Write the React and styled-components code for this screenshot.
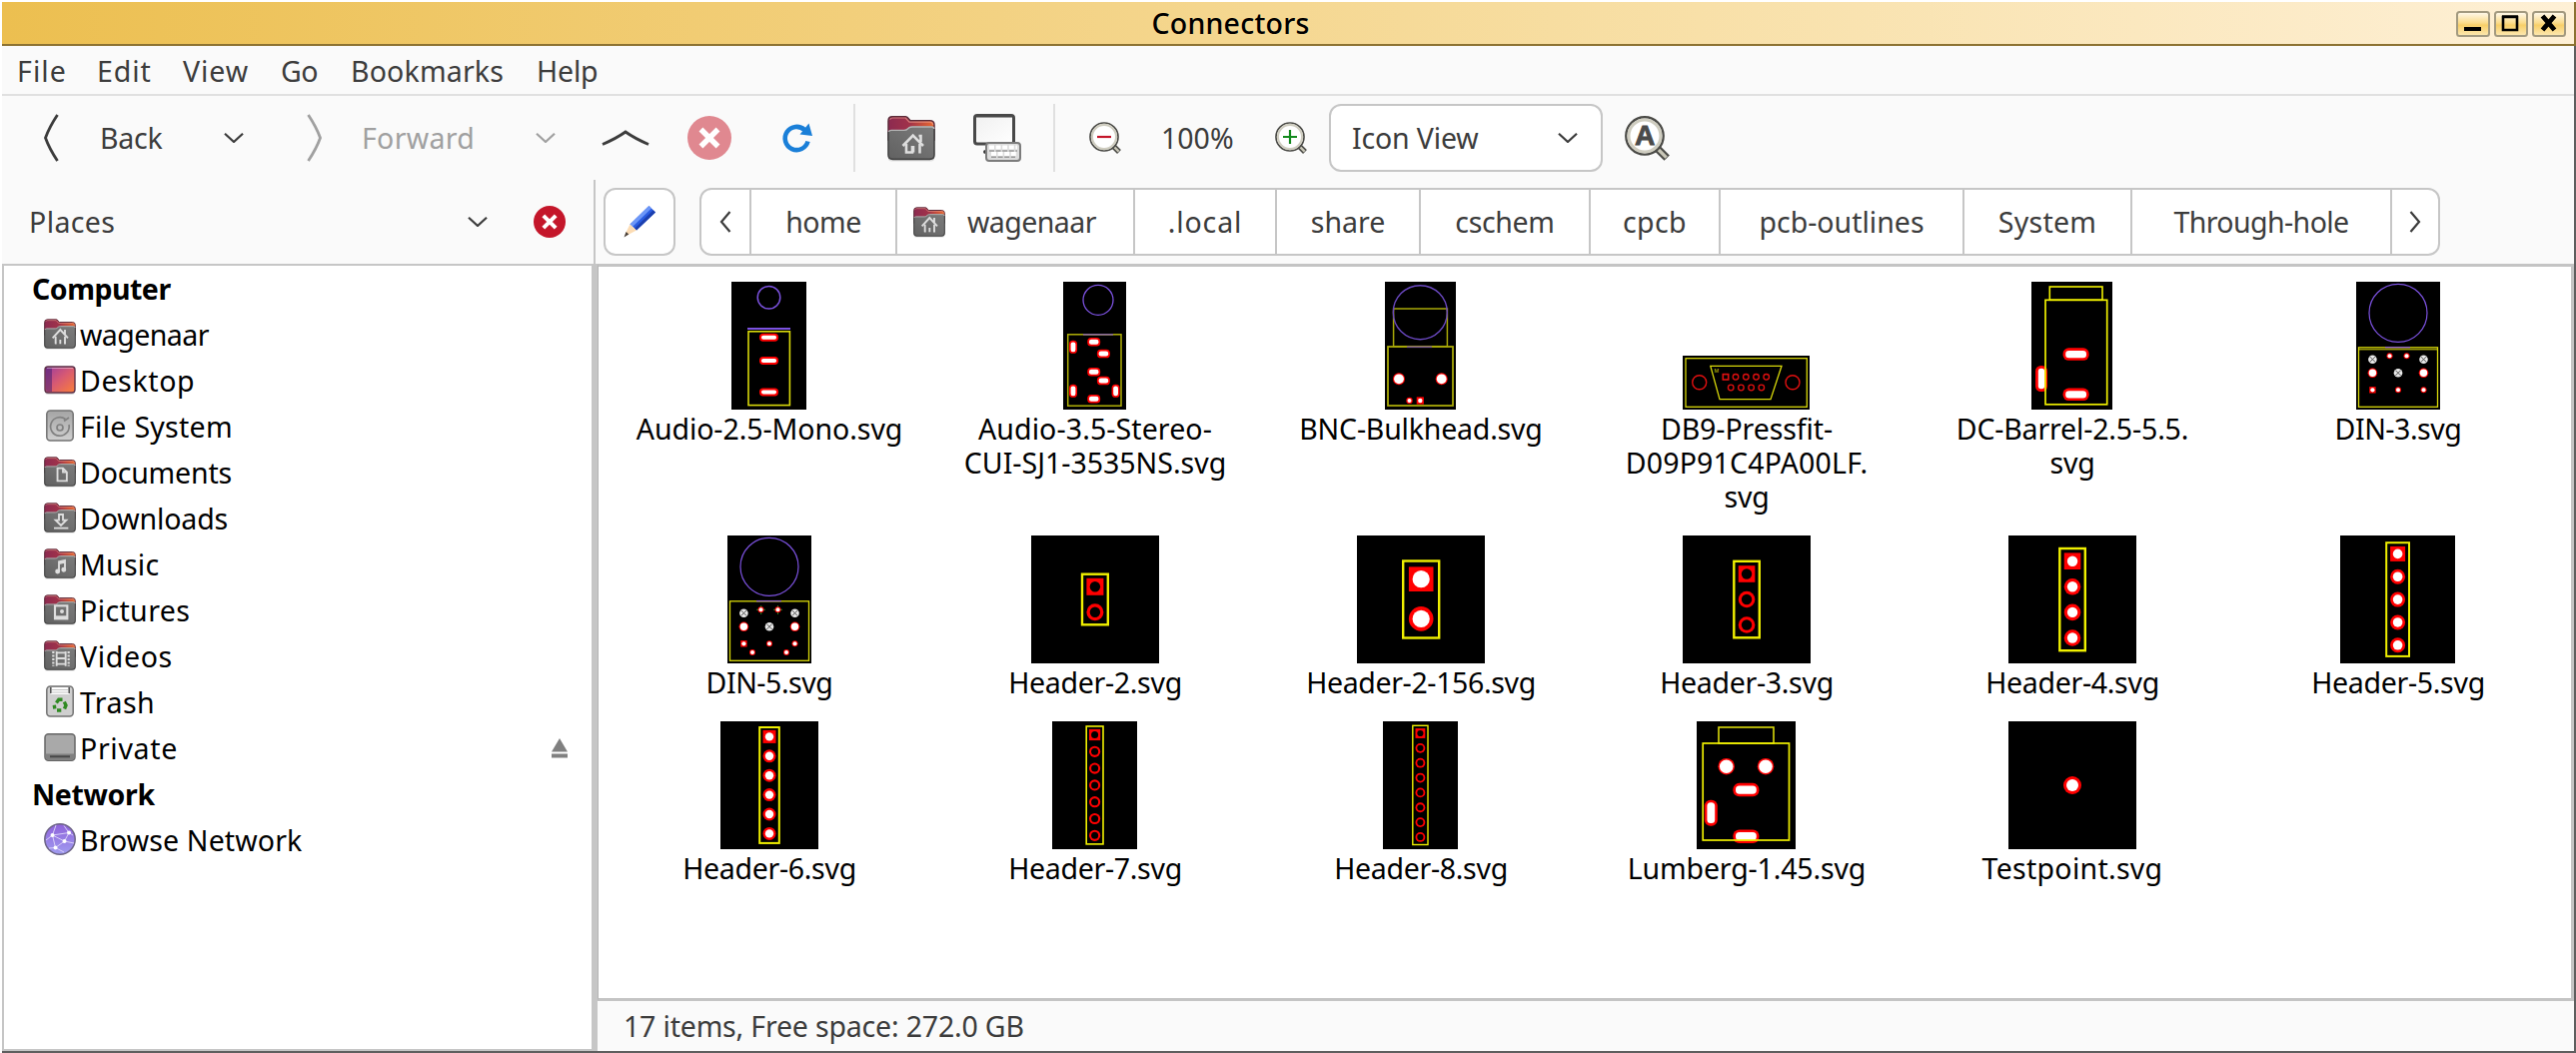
import React from "react";
import styled, { createGlobalStyle, css } from "styled-components";

const Global = createGlobalStyle`
  * { box-sizing: border-box; }
  body {
    margin: 0;
    background: #fff;
    font-family: "Noto Sans", "Open Sans", sans-serif;
    font-size: 28.5px;
    color: #3c3c3c;
  }
  svg { display: block; flex: none; }
`;

const LINE = "#c6c6c6";

/* letter spacing, in px, of the labels that deviate from the default */
const TRACKING = {
  File: 1.1, Edit: 0.9, View: 0.9, Go: -0.6, Bookmarks: 0.17, Help: -0.15,
  Back: -0.2, Forward: 0.33, Places: 0.39, home: -0.5, wagenaar: -0.55,
  ".local": 0.9, cschem: -0.34, cpcb: 0.37, System: 0.24, "Through-hole": -0.58,
  "Icon View": -0.16, Connectors: 0.22, Computer: -0.49, Desktop: 0.62,
  "File System": 0.28, Documents: -0.18, Downloads: -0.13, Music: 0.23,
  Pictures: 0.39, Videos: 0.66, Trash: 0.43, Private: 0.68, Network: -0.35,
  "Browse Network": 0.13, "17 items, Free space: 272.0 GB": -0.18,
  "Audio-2.5-Mono.svg": -0.07, "Audio-3.5-Stereo-": 0.1, "BNC-Bulkhead.svg": -0.2,
  "DB9-Pressfit-": -0.09, "D09P91C4PA00LF.": 0.18, svg: -0.3,
  "DC-Barrel-2.5-5.5.": -0.16, "DIN-3.svg": -0.45, "DIN-5.svg": -0.45,
  "Header-2.svg": -0.3, "Header-3.svg": -0.3, "Header-4.svg": -0.3,
  "Header-5.svg": -0.3, "Header-6.svg": -0.3, "Header-7.svg": -0.3,
  "Header-8.svg": -0.3, "Header-2-156.svg": -0.36, "Lumberg-1.45.svg": -0.15,
  "Testpoint.svg": 0.28,
};

const Tracked = styled.span`
  white-space: pre;
  letter-spacing: ${(p) => p.$ls}px;
`;

const Txt = ({ children }) => <Tracked $ls={TRACKING[children] || 0}>{children}</Tracked>;

/* ---------- window frame ---------- */

const Window = styled.div`
  width: 2578px;
  height: 1054px;
  padding: 2px 0 0 2px;
  display: flex;
  flex-direction: column;
  overflow: hidden;
`;

const TitleBar = styled.header`
  height: 44px;
  flex: none;
  display: grid;
  grid-template-columns: 1fr auto 1fr;
  align-items: center;
  background: linear-gradient(90deg, #ecbf50 0%, #f2cf7b 33%, #f8e0a8 66%, #fef0d6 100%);
  border-bottom: 2px solid #8c7232;
  border-right: 2px solid #8c7232;
`;

const Title = styled.h1`
  grid-column: 2;
  margin: 0 0 1px;
  padding-right: 115px;
  font-size: inherit;
  font-weight: 500;
  line-height: 42px;
  color: #000;
`;

const WindowButtons = styled.div`
  display: flex;
  justify-content: flex-end;
  gap: 4px;
  padding-right: 8px;
`;

const Body = styled.div`
  flex: 1;
  display: flex;
  flex-direction: column;
  background: #fafafa;
  border-right: 2px solid #5f5f5f;
  border-bottom: 2px solid #5f5f5f;
  min-height: 0;
`;

const MenuBar = styled.nav`
  height: 50px;
  flex: none;
  display: flex;
  align-items: center;
  padding: 2px 0 0;
  border-bottom: 2px solid #e0e0e0;
`;

const MenuItem = styled.div`
  width: ${(p) => p.$w}px;
  padding-left: 15px;
  white-space: pre;
`;

const ToolBar = styled.div`
  height: 84px;
  flex: none;
  display: flex;
  align-items: flex-start;
  padding-top: 8px;
`;

const Tool = styled.div`
  width: ${(p) => p.$w}px;
  height: 68px;
  flex: none;
  display: flex;
  align-items: center;
  padding-left: ${(p) => p.$pl || 0}px;
  white-space: pre;
  ${(p) => p.$dim && css`color: #a0a0a0;`}
`;

const Separator = styled.div`
  width: 2px;
  height: 68px;
  flex: none;
  background: #e0e0e0;
`;

const Select = styled.div`
  width: 274px;
  height: 68px;
  flex: none;
  display: flex;
  align-items: center;
  justify-content: space-between;
  padding: 0 23px 0 21px;
  background: #fff;
  border: 2px solid ${LINE};
  border-radius: 12px;
`;

const Panes = styled.div`
  flex: 1;
  display: flex;
  min-height: 0;
`;

const Side = styled.aside`
  width: 594px;
  flex: none;
  display: flex;
  flex-direction: column;
`;

const SideHead = styled.div`
  height: 84px;
  flex: none;
  display: flex;
  align-items: center;
  padding-left: 27px;
  border-right: 2px solid ${LINE};
`;

const SideHeadLabel = styled.div`
  width: 439px;
`;

const SideHeadClose = styled.div`
  margin-left: 46px;
`;

const SideList = styled.div`
  flex: 1;
  background: #fff;
  color: #000;
  border: 2px solid ${LINE};
  border-right-width: 6px;
  margin-right: -2px;
`;

const PlaceRow = styled.div`
  height: 46px;
  display: flex;
  align-items: center;
  padding-left: ${(p) => (p.$heading ? 28 : 40)}px;
  font-weight: ${(p) => (p.$heading ? 700 : 400)};
`;

const PlaceIcon = styled.div`
  width: 32px;
  height: 34px;
  margin-right: 4px;
`;

const Eject = styled.div`
  margin-left: auto;
  margin-right: 24px;
`;

const Main = styled.main`
  flex: 1;
  display: flex;
  flex-direction: column;
  min-width: 0;
`;

const PathRow = styled.div`
  height: 84px;
  flex: none;
  display: flex;
  align-items: center;
  gap: 24px;
  padding-left: 8px;
`;

const EditButton = styled.div`
  width: 72px;
  height: 68px;
  display: flex;
  align-items: center;
  justify-content: center;
  background: #fff;
  border: 2px solid ${LINE};
  border-radius: 12px;
`;

const PathBar = styled.div`
  height: 68px;
  display: flex;
  background: #fff;
  border: 2px solid ${LINE};
  border-radius: 12px;
`;

const Crumb = styled.div`
  width: ${(p) => p.$w}px;
  display: flex;
  align-items: center;
  justify-content: ${(p) => (p.$icon ? "flex-start" : "center")};
  padding-left: ${(p) => (p.$icon ? 16 : 0)}px;
  gap: 22px;
  & + & { border-left: 2px solid ${LINE}; }
`;

const FilePane = styled.section`
  flex: 1;
  background: #fff;
  border: 3px solid #c4c4c4;
  border-left: 1px solid #b4b4b4;
  margin-left: 2px;
  padding: 15px 0 0 8px;
  color: #000;
`;

const FileGrid = styled.div`
  display: grid;
  grid-template-columns: repeat(6, 326px);
  row-gap: 22px;
`;

const FileItem = styled.figure`
  margin: 0;
  display: flex;
  flex-direction: column;
  align-items: center;
`;

const ThumbBox = styled.div`
  height: 130px;
  padding-bottom: 2px;
  display: flex;
  align-items: flex-end;
`;

const BoardSvg = styled.svg`
  margin-right: ${(p) => p.width % 2}px;
`;

const FileName = styled.figcaption`
  display: flex;
  flex-direction: column;
  align-items: center;
  line-height: 34px;
`;

const StatusBar = styled.footer`
  height: 50px;
  flex: none;
  display: flex;
  align-items: center;
  padding-left: 28px;
`;

/* ---------- toolbar drawings ---------- */

const Stroke = ({ w, h, d, c = "#3c3c3c", sw = 2.4 }) => (
  <svg width={w} height={h} viewBox={`0 0 ${w} ${h}`} fill="none" stroke={c} strokeWidth={sw}>
    <path d={d} />
  </svg>
);

const Down = ({ c }) => <Stroke w={20} h={10} c={c} sw={2.2} d="M1 .8L10 9L19 .8" />;

const WinButton = ({ kind }) => (
  <svg width="34" height="26" viewBox="0 0 34 26">
    <defs>
      <linearGradient id="wb" x1="0" y1="0" x2="0" y2="1">
        <stop offset="0" stopColor="#fffaf0" />
        <stop offset=".45" stopColor="#fbdc8c" />
        <stop offset=".55" stopColor="#f8cf68" />
        <stop offset="1" stopColor="#fde9b4" />
      </linearGradient>
    </defs>
    <rect x="1" y="1" width="32" height="24" rx="2.5" fill="url(#wb)" stroke="#a39a80" strokeWidth="2" />
    {kind === "min" && <rect x="8" y="16" width="17" height="4" fill="#000" />}
    {kind === "max" && <path d="M9 6V19H23V6ZM8 5.5H24" fill="none" stroke="#000" strokeWidth="2.6" />}
    {kind === "close" && <path d="M10.500 5L22.500 19M22.500 5L10.500 19" stroke="#000" strokeWidth="4.8" />}
  </svg>
);

const CloseDot = ({ r, c }) => (
  <svg width={r * 2} height={r * 2} viewBox="0 0 32 32">
    <circle cx="16" cy="16" r="16" fill={c} />
    <path d="M9.800 9.800L22.200 22.200M22.200 9.800L9.800 22.200" stroke="#fff" strokeWidth="4" />
  </svg>
);

const Reload = () => (
  <svg width="32" height="32" viewBox="0 0 32 32">
    <path d="M26.5 19.5A11.6 11.6 0 1 1 23.2 8" fill="none" stroke="#1a7fd8" strokeWidth="4.6" />
    <path d="M27.5 1.5L31 14L18.5 12.5Z" fill="#1a7fd8" />
  </svg>
);

const Folder = ({ size, children }) => (
  <svg width={size} height={size} viewBox="0 0 48 48">
    <defs>
      <linearGradient id="fb" x1="0" y1="0" x2="1" y2="0">
        <stop offset="0" stopColor="#8c2a50" />
        <stop offset=".45" stopColor="#a0324a" />
        <stop offset="1" stopColor="#ea6a30" />
      </linearGradient>
      <linearGradient id="ff" x1="0" y1="1" x2="1" y2="0">
        <stop offset="0" stopColor="#616161" />
        <stop offset="1" stopColor="#7c7c7c" />
      </linearGradient>
    </defs>
    <rect x="1" y="40" width="46" height="7.5" rx="3" fill="#000" opacity=".1" />
    <path d="M1 7Q1 2.800 5 2.800H18.500Q20 2.800 21.500 5L23 6.800H42.500Q47 6.800 47 11V26H1Z" fill="url(#fb)" stroke="#5a2a38" strokeWidth="1.500" />
    <path d="M2.600 5.600Q3.500 4 5.500 4H18.300L22 8.200H43Q45.600 8.400 45.700 11" fill="none" stroke="#f0a090" strokeWidth="1.200" opacity=".65" />
    <path d="M1 18Q1 16 4 16H17Q19 16 21 14L22 13.200Q23 12.500 25 12.500H44.500Q47 12.500 47 15V41Q47 45.400 42.500 45.400H5.500Q1 45.400 1 41Z" fill="url(#ff)" />
    <path d="M1.500 17.800Q2 16.400 4 16.400H17Q19 16.400 21 14.400L22 13.600Q23 13 25 13H44.500Q46.500 13 46.700 15" fill="none" stroke="#b4b4b4" strokeWidth="1.400" />
    <path d="M1 18V41Q1 45.400 5.500 45.400H42.500Q47 45.400 47 41V15" fill="none" stroke="#444" strokeWidth="1.600" />
    <g fill="none" stroke="#dedede" strokeWidth="2.800">{children}</g>
  </svg>
);

const HomeGlyph = () => (
  <>
    <path d="M13 30.500L24.500 18L36 30.500M31.500 18V26" />
    <path d="M17.500 28V39.500M31.500 28V39.500M24.500 39.500V33M16.500 38.300H19M30 38.300H33" />
  </>
);

const BigHomeGlyph = () => (
  <g strokeWidth="2.600">
    <path d="M15.500 32L25.700 21.500L36 32M31.500 22H33.500V28" />
    <path d="M19 30V38.500H25V32M26 38.500V32M32.500 30V39.500" />
  </g>
);

const glyphs = {
  home: <HomeGlyph />,
  documents: <path d="M20.300 19H28.500L34.300 25V38H20.300ZM28.500 19V25H34.300" />,
  downloads: <path d="M22.500 19.500H28.500V28H33.500L25.500 36L17.500 28H22.500ZM15 40H36.500" />,
  music: (
    <>
      <path d="M22.500 36V21.500L31.500 19.500V33M22.500 24L31.500 22" />
      <circle cx="20.500" cy="36" r="2.300" fill="#dedede" />
      <circle cx="29.700" cy="33.500" r="2.300" fill="#dedede" />
    </>
  ),
  pictures: (
    <>
      <rect x="16.500" y="18.500" width="18.500" height="19.500" strokeWidth="3.200" />
      <path d="M16 36H36" strokeWidth="5" />
      <circle cx="27" cy="27" r="1.600" />
    </>
  ),
  videos: (
    <>
      <path d="M14 18V40M37 18V40" strokeWidth="3.400" strokeDasharray="3 2.200" />
      <path d="M19 18V40M32.500 18V40M19 20H32.500M19 28.500H32.500M19 37H32.500" />
    </>
  ),
};

const Desktop = () => (
  <svg width="32" height="32" viewBox="0 0 32 32">
    <defs>
      <linearGradient id="dk" x1="0" y1="0" x2="1" y2="1">
        <stop offset="0" stopColor="#9a3aa0" />
        <stop offset=".5" stopColor="#d85a72" />
        <stop offset="1" stopColor="#fb8038" />
      </linearGradient>
    </defs>
    <rect x="1" y="5" width="30" height="26" rx="3" fill="#000" opacity=".14" />
    <rect x="1" y="3" width="30" height="26" rx="3" fill="url(#dk)" stroke="#5c3048" strokeWidth="1.400" />
    <path d="M2 5Q2 4 4 4H8V28H4Q2 28 2 26Z" fill="#4a2070" opacity=".55" />
    <path d="M3 4.500H29" stroke="#fff" opacity=".4" />
  </svg>
);

const Disk = () => (
  <svg width="32" height="32" viewBox="0 0 32 32">
    <defs>
      <linearGradient id="ds" x1="0" y1="0" x2="0" y2="1">
        <stop offset="0" stopColor="#a4a4a4" />
        <stop offset="1" stopColor="#d0d0d0" />
      </linearGradient>
    </defs>
    <rect x="2.800" y="1" width="26.400" height="30" rx="3.500" fill="url(#ds)" stroke="#727272" strokeWidth="1.500" />
    <path d="M21.500 9.500A9.300 9.300 0 1 0 25 15" fill="none" stroke="#808080" strokeWidth="1.700" />
    <path d="M20 11.500L25 8" stroke="#808080" strokeWidth="1.700" />
    <circle cx="16" cy="18" r="3" fill="none" stroke="#808080" strokeWidth="1.700" />
  </svg>
);

const Trash = () => (
  <svg width="32" height="32" viewBox="0 0 32 32">
    <rect x="2.800" y="1" width="26.400" height="30" rx="3.500" fill="#cfcfcf" stroke="#727272" strokeWidth="1.500" />
    <rect x="6.500" y="2" width="19" height="7" fill="#fff" />
    <path d="M6.800 2V8M25.200 2V8" stroke="#555" strokeWidth="1.600" />
    <path d="M8 4.500H24M8 7H24" stroke="#bbb" strokeWidth=".9" />
    <g fill="none" stroke="#2f8a22" strokeWidth="3.400">
      <path d="M12.400 17.500L14.800 14.300H18.500" />
      <path d="M20.300 16.600L22 20L20.500 23.500" />
      <path d="M17.300 25H13M10.800 23.500L10.300 19.800" />
    </g>
  </svg>
);

const Drive = () => (
  <svg width="32" height="32" viewBox="0 0 32 32">
    <rect x="1" y="2.800" width="30" height="26.500" rx="3.500" fill="#a9a9a9" stroke="#666" strokeWidth="1.500" />
    <path d="M1.500 22.500H30.500V26Q30.500 28.700 27.500 28.700H4.500Q1.500 28.700 1.500 26Z" fill="#808080" />
    <path d="M6 25.300H26" stroke="#484848" strokeWidth="2" />
  </svg>
);

const Globe = () => (
  <svg width="32" height="32" viewBox="0 0 32 32">
    <defs>
      <linearGradient id="gl" x1="0" y1="0" x2="0" y2="1">
        <stop offset="0" stopColor="#8f62da" />
        <stop offset="1" stopColor="#a09cf0" />
      </linearGradient>
    </defs>
    <circle cx="16" cy="16" r="15.200" fill="url(#gl)" stroke="#6c6484" strokeWidth="1.500" />
    <path d="M8.500 12L25 9.500L20.500 18L11.500 24.500ZM8.500 12L20.500 18L30 20M8.500 12L2 17M25 9.500L20 2.500M8.500 12L12 2M25 9.500L29 12M11.500 24.500L20 29M11.500 24.500L5 25" fill="none" stroke="#d9cff8" strokeWidth="1" />
    <g fill="#fff">
      <circle cx="8.500" cy="12" r="2" />
      <circle cx="25" cy="9.500" r="2" />
      <circle cx="20.500" cy="18" r="2" />
      <circle cx="11.500" cy="24.500" r="2" />
    </g>
  </svg>
);

const EjectIcon = () => (
  <svg width="16" height="20" viewBox="0 0 16 20" fill="#808080">
    <path d="M8 0L16 13.500H0ZM0 15.500H16V19.500H0Z" />
  </svg>
);

const Computer = () => (
  <svg width="48" height="48" viewBox="0 0 48 48">
    <defs>
      <linearGradient id="sc" x1="0" y1="0" x2="1" y2="1">
        <stop offset="0" stopColor="#f0f0f0" />
        <stop offset="1" stopColor="#ffffff" />
      </linearGradient>
    </defs>
    <ellipse cx="12.500" cy="38" rx="2.500" ry="2" fill="#333" />
    <rect x="1.500" y="1.500" width="39" height="28.500" rx="2.500" fill="url(#sc)" stroke="#484848" strokeWidth="3" />
    <path d="M3 3.500H39" stroke="#999" strokeWidth="1.200" />
    <rect x="13" y="29" width="34" height="18" rx="3" fill="#dcdcdc" stroke="#7c7c7c" strokeWidth="2" />
    <path d="M16 33.500H44M18 40H43" stroke="#fff" strokeWidth="4" strokeDasharray="5 1.600" />
    <path d="M16 37H44M18 43.300H42" stroke="#9a9a9a" strokeWidth="1.600" strokeDasharray="5 1.600" />
  </svg>
);

const Lens = ({ size, c = 15, r = 14, children }) => (
  <svg width={size} height={size} viewBox="0 0 32 32">
    <path d={`M${c + 8} ${c + 8}L30 30`} stroke="#4a4a46" strokeWidth="5.400" />
    <path d={`M${c + 8} ${c + 8}L29.600 29.600`} stroke="#c9c7b8" strokeWidth="2.400" />
    <circle cx={c} cy={c} r={r} fill="#fff" stroke="#4a4a46" strokeWidth="1.700" />
    <circle cx={c} cy={c} r={r - 1.9} fill="#fff" stroke="#cfcdc0" strokeWidth="2.200" />
    {children}
  </svg>
);

const LensText = styled.text`
  font: 700 20px "Liberation Sans", sans-serif;
  fill: #4a4a4a;
  stroke: #4a4a4a;
  stroke-width: 0.6px;
`;

const Pencil = () => (
  <svg width="32" height="32" viewBox="0 0 32 32">
    <path d="M25.500 0L32 6.500L13 24.500L6.500 18.500Z" fill="#2a5ce0" />
    <path d="M25.500 0L28 2.500L9 21L6.500 18.500Z" fill="#6d97f8" />
    <path d="M29.700 4.200L32 6.500L13 24.500L11 22.700Z" fill="#1c3fae" />
    <path d="M6.500 18.500L13 24.500L3.500 29.500L1.800 28Z" fill="#fcdcb4" />
    <path d="M2.600 26L5.300 28.600L.500 31.500Z" fill="#4a4038" />
  </svg>
);

/* ---------- connector outlines ---------- */

const Y = "#d9d90a";
const P = "#7c52e0";
const R = "#ff0000";

const Board = ({ w, h = 128, children }) => (
  <BoardSvg width={w} height={h} viewBox={`0 0 ${w} ${h}`}>
    <rect width={w} height={h} fill="#000" />
    {children}
  </BoardSvg>
);

const Box = ({ x1, y1, x2, y2, c = Y, sw = 1.6 }) => (
  <rect x={x1} y={y1} width={x2 - x1} height={y2 - y1} fill="none" stroke={c} strokeWidth={sw} />
);

const Ring = ({ x, y, r, c = P, sw = 1.3 }) => (
  <circle cx={x} cy={y} r={r} fill="none" stroke={c} strokeWidth={sw} />
);

const Slot = ({ x, y, w, h, t = 2 }) => (
  <>
    <rect x={x - w / 2} y={y - h / 2} width={w} height={h} rx={Math.min(w, h) / 2.2} fill={R} />
    <rect
      x={x - w / 2 + t}
      y={y - h / 2 + t}
      width={w - 2 * t}
      height={h - 2 * t}
      rx={(Math.min(w, h) - 2 * t) / 2.2}
      fill="#fff"
    />
  </>
);

const Pad = ({ x, y, r, hole, fill = "#fff", square }) => (
  <>
    {square ? (
      <rect x={x - r} y={y - r} width={2 * r} height={2 * r} fill={R} />
    ) : (
      <circle cx={x} cy={y} r={r} fill={R} />
    )}
    <circle cx={x} cy={y} r={hole} fill={fill} />
  </>
);

const Peg = ({ x, y }) => (
  <>
    <circle cx={x} cy={y} r="4.300" fill="#e8e8e8" />
    <path d={`M${x - 2.6} ${y - 2.6}l5.200 5.200M${x + 2.6} ${y - 2.6}l-5.200 5.200`} stroke="#555" strokeWidth="1" />
  </>
);

const Header = ({ w = 128, box, n, first, step, r, hole, fill, sw = 2.4 }) => (
  <Board w={w}>
    <Box x1={box[0]} y1={box[1]} x2={box[2]} y2={box[3]} c="#f0f000" sw={sw} />
    {Array.from({ length: n }, (_, i) => (
      <Pad key={i} x={(box[0] + box[2]) / 2} y={first + i * step} r={r} hole={hole} fill={fill} square={i === 0} />
    ))}
  </Board>
);

const Din = ({ five }) => (
  <Board w={84}>
    <Ring x={42} y={31.3} r={29} sw={1.2} />
    <Box x1={2.5} y1={65.8} x2={81.5} y2={125.3} sw={1.3} />
    {!five && <path d="M2.500 67.800H81.500" stroke={Y} strokeWidth="1" />}
    <path d="M29 65.600H54" stroke="#9a6cc8" strokeWidth="1.300" />
    <Peg x={16.4} y={77.7} />
    <Peg x={67.5} y={77.7} />
    <Peg x={42} y={91.3} />
    <Pad x={16.4} y={91.3} r={4.8} hole={3.7} />
    <Pad x={67.5} y={91.3} r={4.8} hole={3.7} />
    {five && <path d="M33.700 70V79M29 74.300H38M50.500 70V79M46 74.300H55" stroke="#1f8a1f" strokeWidth="1" />}
    <Pad x={33.500} y={74.3} r={3} hole={2} />
    <Pad x={50.500} y={74.3} r={3} hole={2} />
    <Pad x={16.4} y={108.3} r={3.2} hole={2.1} square />
    <Pad x={42} y={108.3} r={3} hole={2} />
    <Pad x={67.5} y={108.3} r={3} hole={2} />
    {five && <Pad x={25} y={117} r={3} hole={2} />}
    {five && <Pad x={59} y={117} r={3} hole={2} />}
  </Board>
);

const Mark = styled.text`
  font: 5.5px "Liberation Sans", sans-serif;
  fill: #d9d90a;
`;

const FILES = [
  {
    lines: ["Audio-2.5-Mono.svg"],
    art: (
      <Board w={75}>
        <Ring x={37.5} y={15.7} r={11.3} sw={1.5} />
        <path d="M16 47H59" stroke={P} strokeWidth="2" />
        <Box x1={17} y1={49.8} x2={58.4} y2={123.6} />
        <Slot x={37.5} y={55.7} w={19} h={8} />
        <Slot x={37.5} y={79} w={19} h={8} />
        <Slot x={37.5} y={110.4} w={19} h={8} />
      </Board>
    ),
  },
  {
    lines: ["Audio-3.5-Stereo-", "CUI-SJ1-3535NS.svg"],
    art: (
      <Board w={63}>
        <Ring x={35} y={18.3} r={15} />
        <Box x1={4.7} y1={52.8} x2={58} y2={124.2} sw={1.5} c="#b0b008" />
        <path d="M20 52.800H50" stroke="#8c6a9c" strokeWidth="1.600" />
        <Slot x={30.7} y={60.3} w={13} h={8.5} t={1.7} />
        <Slot x={40.4} y={72} w={13} h={8.5} t={1.7} />
        <Slot x={30.7} y={90.3} w={13} h={8.5} t={1.7} />
        <Slot x={40.4} y={99} w={13} h={8.5} t={1.7} />
        <Slot x={30.7} y={117.3} w={13} h={8.5} t={1.7} />
        <Slot x={10} y={65.3} w={8} h={13} t={1.6} />
        <Slot x={10} y={109.3} w={8} h={13} t={1.6} />
        <Slot x={52.6} y={109.3} w={8} h={13} t={1.6} />
      </Board>
    ),
  },
  {
    lines: ["BNC-Bulkhead.svg"],
    art: (
      <Board w={71}>
        <Box x1={8.6} y1={27} x2={62.4} y2={64.7} c="#a8a808" sw={1.5} />
        <Ring x={35.3} y={30.7} r={27} c="#6a48c0" sw={1.4} />
        <Box x1={3} y1={65} x2={68} y2={124} c="#a8a808" sw={1.8} />
        <path d="M22 65.300H47" stroke="#7a5a8c" strokeWidth="1.600" />
        <Pad x={14} y={97.3} r={6} hole={4.9} />
        <Pad x={56.7} y={97.3} r={6} hole={4.9} />
        <Pad x={24.5} y={119} r={3.2} hole={2} />
        <Pad x={35.3} y={119} r={3.6} hole={2.2} square />
      </Board>
    ),
  },
  {
    lines: ["DB9-Pressfit-", "D09P91C4PA00LF.", "svg"],
    art: (
      <Board w={127} h={54}>
        <Box x1={3} y1={2.7} x2={124.3} y2={51.3} sw={1.3} />
        <path d="M27.800 10.300H99L88 43.700H37Z" fill="none" stroke={Y} strokeWidth="1.300" />
        <Mark x="31.500" y="16.500">M</Mark>
        <Ring x={16.7} y={26.7} r={7} c="#e01010" sw={1.4} />
        <Ring x={110} y={26.7} r={7} c="#e01010" sw={1.4} />
        <rect x="40.300" y="18.600" width="5.400" height="5.400" fill="none" stroke="#e01010" strokeWidth="1.600" />
        {[53, 63.3, 73.5, 83.7].map((x) => (
          <Ring key={x} x={x} y={21.3} r={2.8} c="#e01010" />
        ))}
        {[48.2, 58.4, 68.6, 78.8].map((x) => (
          <Ring key={x} x={x} y={32} r={2.8} c="#e01010" />
        ))}
      </Board>
    ),
  },
  {
    lines: ["DC-Barrel-2.5-5.5.", "svg"],
    art: (
      <Board w={81}>
        <Slot x={10} y={97} w={12} h={26} t={2.8} />
        <Slot x={44.6} y={72.6} w={26} h={12.5} t={2.6} />
        <Slot x={44.6} y={112.8} w={26} h={12.5} t={2.6} />
        <Box x1={18.3} y1={5} x2={71} y2={18.3} c="#f0f000" />
        <Box x1={14} y1={18.3} x2={75.7} y2={122.8} c="#f0f000" sw={1.7} />
      </Board>
    ),
  },
  { lines: ["DIN-3.svg"], art: <Din /> },
  { lines: ["DIN-5.svg"], art: <Din five /> },
  {
    lines: ["Header-2.svg"],
    art: <Header box={[51, 38.7, 76.8, 89.3]} n={2} first={51.3} step={25.4} r={8.5} hole={5.2} fill="#000" />,
  },
  {
    lines: ["Header-2-156.svg"],
    art: <Header box={[46.2, 25.5, 82.2, 102.5]} n={2} first={43.7} step={39.7} r={12.3} hole={8.6} />,
  },
  {
    lines: ["Header-3.svg"],
    art: <Header box={[51.3, 25.8, 76.8, 102.3]} n={3} first={38.5} step={25.5} r={8.3} hole={5.2} fill="#000" />,
  },
  {
    lines: ["Header-4.svg"],
    art: <Header box={[51.3, 13, 76.8, 115.2]} n={4} first={25.7} step={25.6} r={8.3} hole={5.2} />,
  },
  {
    lines: ["Header-5.svg"],
    art: <Header w={115} box={[46.2, 7.2, 69, 120.9]} n={5} first={18.4} step={22.85} r={7.5} hole={4.8} sw={2} />,
  },
  {
    lines: ["Header-6.svg"],
    art: <Header w={98} box={[39.2, 6, 58.8, 121.9]} n={6} first={15.4} step={19.4} r={6.5} hole={4.2} sw={2} />,
  },
  {
    lines: ["Header-7.svg"],
    art: (
      <Header w={85} box={[34.2, 5, 51, 122.9]} n={7} first={13.5} step={16.8} r={5.6} hole={3.5} fill="#000" sw={1.6} />
    ),
  },
  {
    lines: ["Header-8.svg"],
    art: (
      <Header w={75} box={[29.8, 4.3, 45, 123.5]} n={8} first={12} step={14.85} r={4.9} hole={3.1} fill="#000" sw={1.4} />
    ),
  },
  {
    lines: ["Lumberg-1.45.svg"],
    art: (
      <Board w={99}>
        <Pad x={29.7} y={45.2} r={8.3} hole={6.8} />
        <Pad x={69} y={45.2} r={8.3} hole={6.8} />
        <Slot x={49.4} y={68.6} w={26} h={13.5} t={2.6} />
        <Slot x={14.3} y={91.7} w={13} h={26} t={2.6} />
        <Slot x={49.4} y={115.2} w={26} h={13.5} t={2.6} />
        <Box x1={22} y1={6} x2={77} y2={22} sw={1.6} />
        <Box x1={6.2} y1={22} x2={92.5} y2={119} c="#f0f000" sw={1.7} />
      </Board>
    ),
  },
  {
    lines: ["Testpoint.svg"],
    art: (
      <Board w={128}>
        <Pad x={64} y={64} r={9} hole={6} />
      </Board>
    ),
  },
];

const MENUS = [["File", 80], ["Edit", 86], ["View", 98], ["Go", 70], ["Bookmarks", 186], ["Help", 100]];

const PLACES = [
  ["wagenaar", <Folder size={32}>{glyphs.home}</Folder>],
  ["Desktop", <Desktop />],
  ["File System", <Disk />],
  ["Documents", <Folder size={32}>{glyphs.documents}</Folder>],
  ["Downloads", <Folder size={32}>{glyphs.downloads}</Folder>],
  ["Music", <Folder size={32}>{glyphs.music}</Folder>],
  ["Pictures", <Folder size={32}>{glyphs.pictures}</Folder>],
  ["Videos", <Folder size={32}>{glyphs.videos}</Folder>],
  ["Trash", <Trash />],
  ["Private", <Drive />, true],
];

const CRUMBS = [
  ["home", 146],
  ["wagenaar", 238, true],
  [".local", 142],
  ["share", 144],
  ["cschem", 170],
  ["cpcb", 130],
  ["pcb-outlines", 244],
  ["System", 168],
  ["Through-hole", 260],
];

export default function App() {
  return (
    <Window>
      <Global />
      <TitleBar>
        <Title><Txt>Connectors</Txt></Title>
        <WindowButtons>
          <WinButton kind="min" />
          <WinButton kind="max" />
          <WinButton kind="close" />
        </WindowButtons>
      </TitleBar>
      <Body>
        <MenuBar>
          {MENUS.map(([name, w]) => (
            <MenuItem key={name} $w={w}><Txt>{name}</Txt></MenuItem>
          ))}
        </MenuBar>
        <ToolBar>
          <Tool $w={98} $pl={40}><Stroke w={18} h={48} sw={2.8} d="M15.500 1C9.500 10 6 17 3.500 24C6 31 9.500 38 15.500 47" /></Tool>
          <Tool $w={122}><Txt>Back</Txt></Tool>
          <Tool $w={84} $pl={2}><Down /></Tool>
          <Tool $w={55}><Stroke w={18} h={48} c="#a0a0a0" sw={2.8} d="M2.500 1C8.500 10 12 17 14.500 24C12 31 8.500 38 2.500 47" /></Tool>
          <Tool $w={173} $pl={1} $dim><Txt>Forward</Txt></Tool>
          <Tool $w={68} $pl={2}><Down c="#a0a0a0" /></Tool>
          <Tool $w={86}><Stroke w={48} h={16} sw={2.8} d="M1 14.500C9 11 17 7 24 2C31 7 39 11 47 14.500" /></Tool>
          <Tool $w={94}><CloseDot r={22} c="#e08890" /></Tool>
          <Tool $w={72}><Reload /></Tool>
          <Separator />
          <Tool $w={118} $pl={32}><Folder size={48}><BigHomeGlyph /></Folder></Tool>
          <Tool $w={80}><Computer /></Tool>
          <Separator />
          <Tool $w={106} $pl={34}><Lens size={32}><path d="M8 15H22" stroke="#c4162a" strokeWidth="2.200" /></Lens></Tool>
          <Tool $w={114}><Txt>100%</Txt></Tool>
          <Tool $w={54}><Lens size={32}><path d="M8 15H22M15 8V22" stroke="#138a1e" strokeWidth="2.200" /></Lens></Tool>
          <Select>
            <Txt>Icon View</Txt>
            <Down />
          </Select>
          <Tool $w={70} $pl={22}>
            <Lens size={45} c={14.2} r={13.3}><LensText x="14.300" y="20.800" textAnchor="middle">A</LensText></Lens>
          </Tool>
        </ToolBar>
        <Panes>
          <Side>
            <SideHead>
              <SideHeadLabel><Txt>Places</Txt></SideHeadLabel>
              <Down />
              <SideHeadClose><CloseDot r={16} c="#c4162a" /></SideHeadClose>
            </SideHead>
            <SideList>
              <PlaceRow $heading><Txt>Computer</Txt></PlaceRow>
              {PLACES.map(([name, icon, ejectable]) => (
                <PlaceRow key={name}>
                  <PlaceIcon>{icon}</PlaceIcon>
                  <Txt>{name}</Txt>
                  {ejectable && <Eject><EjectIcon /></Eject>}
                </PlaceRow>
              ))}
              <PlaceRow $heading><Txt>Network</Txt></PlaceRow>
              <PlaceRow>
                <PlaceIcon><Globe /></PlaceIcon>
                <Txt>Browse Network</Txt>
              </PlaceRow>
            </SideList>
          </Side>
          <Main>
            <PathRow>
              <EditButton><Pencil /></EditButton>
              <PathBar>
                <Crumb $w={48}><Stroke w={12} h={22} sw={2.2} d="M10.500 1L2 11L10.500 21" /></Crumb>
                {CRUMBS.map(([name, w, home]) => (
                  <Crumb key={name} $w={w} $icon={home}>
                    {home && <Folder size={32}><HomeGlyph /></Folder>}
                    <Txt>{name}</Txt>
                  </Crumb>
                ))}
                <Crumb $w={48}><Stroke w={12} h={22} sw={2.2} d="M1.500 1L10 11L1.500 21" /></Crumb>
              </PathBar>
            </PathRow>
            <FilePane>
              <FileGrid>
                {FILES.map(({ lines, art }) => (
                  <FileItem key={lines[0]}>
                    <ThumbBox>{art}</ThumbBox>
                    <FileName>
                      {lines.map((line) => (
                        <Txt key={line}>{line}</Txt>
                      ))}
                    </FileName>
                  </FileItem>
                ))}
              </FileGrid>
            </FilePane>
            <StatusBar><Txt>17 items, Free space: 272.0 GB</Txt></StatusBar>
          </Main>
        </Panes>
      </Body>
    </Window>
  );
}
